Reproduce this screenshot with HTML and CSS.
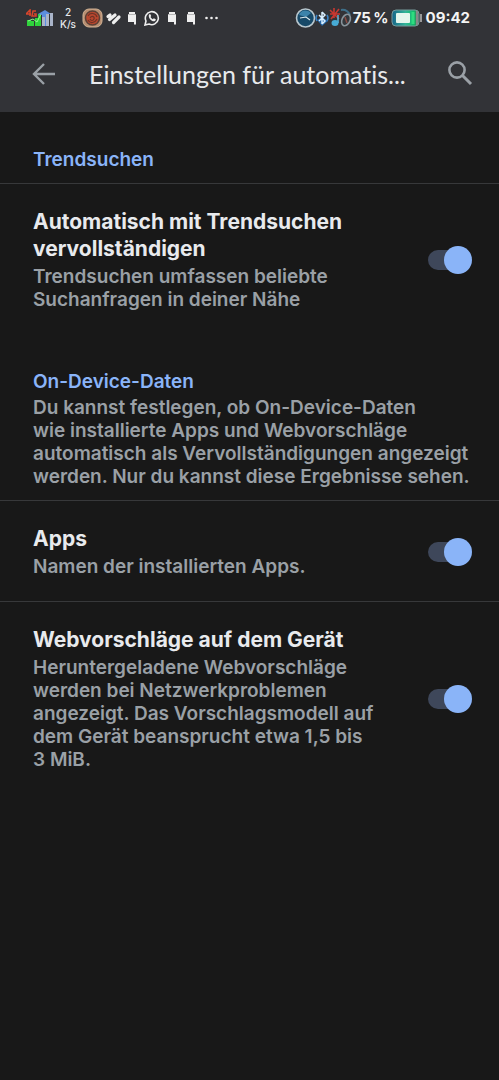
FILE: index.html
```html
<!DOCTYPE html>
<html lang="de">
<head>
<meta charset="utf-8">
<meta name="viewport" content="width=device-width, initial-scale=1">
<title>Einstellungen</title>
<link rel="stylesheet" href="styles.css">
</head>
<body>
<svg class="defs" width="0" height="0" aria-hidden="true">
  <symbol id="note" viewBox="0 0 10 16"><path d="M2 2h6v2h1v10.500H7V12H1V4h1z" fill="#eee"/><path d="M1 4.500h8" stroke="#aaa" stroke-width=".8"/></symbol>
</svg>
<div class="status">
  <div class="status-left">
    <svg class="signal" width="28" height="18" viewBox="0 0 28 18" aria-hidden="true">
      <path d="M4 7V1L0 5h5M10 2H7L6 7h4V5H8" fill="none" stroke="#d8452c" stroke-width="1.500"/>
      <path d="M1 11h4v6H1zM5 12h3v5H5zM9 9h3v8H9zM12 5h3v12h-3z" fill="#2fd23b"/>
      <path d="M2 12l5-2 4 3 4-8" fill="none" stroke="#8cf58a"/>
      <path d="M12 5l7-4 6 4h-3v12h-6V6z" fill="#5b8ddf"/>
      <path d="M16 8h3v9h-3zM20 5h3v12h-3zM24 4h3v13h-3z" fill="#a9b4c9"/>
    </svg>
    <div class="rate"><span>2</span><span>K/s</span></div>
    <svg class="badge" width="21" height="20" viewBox="0 0 21 20" aria-hidden="true">
      <rect x="1" y="1" width="19" height="18" rx="6" fill="#b98f72" stroke="#d1b294"/>
      <circle cx="10.500" cy="10" r="7" fill="#b9472e" stroke="#5b4036" stroke-width="1.500"/>
      <path d="M6 8c2-4 8-3 9 1M6 12c2 4 7 3 9-1M8 10c2-3 5-1 4 1s-3 2-4 0" fill="none" stroke="#6f3326" stroke-width="1.200"/>
    </svg>
    <svg class="heart" width="17" height="15" viewBox="0 0 17 15" fill="none" stroke="#eee" stroke-width="3.200" stroke-linecap="round" stroke-linejoin="round" aria-hidden="true"><path d="M3 5.500L5 4M4.500 8.500L10 4M8.500 11.500l5.500-5.500"/></svg>
    <svg class="note" width="10" height="16"><use href="#note"/></svg>
    <svg class="chat" width="16" height="16" viewBox="0 0 16 16" aria-hidden="true"><path d="M1 15l1-4a6.500 6.500 0 1 1 3 3z" fill="none" stroke="#eee" stroke-width="1.600"/><path d="M5 4.500l1.200-.5 1 2-.7 1c.5 1 1.300 1.700 2.300 2.200l1-.9 2 1c0 2-2 2.500-3.500 1.700C6.500 10.200 4 7 5 4.500z" fill="#eee"/></svg>
    <svg class="note" width="10" height="16"><use href="#note"/></svg>
    <svg class="note" width="10" height="16"><use href="#note"/></svg>
    <svg class="dots" width="13" height="4" viewBox="0 0 13 4" fill="#eee" aria-hidden="true"><circle cx="1.500" cy="2" r="1.300"/><circle cx="6.500" cy="2" r="1.300"/><circle cx="11.500" cy="2" r="1.300"/></svg>
  </div>
  <div class="status-right">
    <svg width="58" height="22" viewBox="0 0 58 22" aria-hidden="true">
      <circle cx="10.500" cy="11" r="9" fill="#174968" stroke="#b8c7ce" stroke-width="1.600"/>
      <path d="M4 8a7 7 0 0 1 12-2l-5 4z" fill="#3c83aa"/><path d="M5 11l6-1 4 3" fill="none" stroke="#dfecef" stroke-width="1.100"/>
      <path d="M22 8q-2 3 0 6M32 8q2 3 0 6" fill="none" stroke="#3b86c9" stroke-width="1.500"/>
      <path d="M22 13l5-3 6 4-6 5z" fill="#2567a8"/><path d="M27 5v12M24 8l6 6-3 3M27 5l3 3-6 6" fill="none" stroke="#d9efff" stroke-width="1.500"/>
      <path d="M35 3l9 9M44 2l-8 10M39 1v10M35 7h10" stroke="#c93730" stroke-width="1.600"/>
      <path d="M43 8v8" stroke="#58b7dc" stroke-width="1.500"/><ellipse cx="40" cy="16" rx="3.500" ry="3" fill="#47abd5"/>
      <path d="M46 3q6-1 9 5" fill="none" stroke="#3e6f89" stroke-width="2"/>
      <ellipse cx="51" cy="13" rx="4" ry="6" transform="rotate(25 51 13)" fill="#33383c" stroke="#88949b" stroke-width="1.600"/><path d="M50 10l2 6" stroke="#8a4a44" stroke-width="1.500"/>
    </svg>
    <span>75&#8201;%</span>
    <svg class="battery" width="31" height="18" viewBox="0 0 31 18" aria-hidden="true">
      <defs><linearGradient id="cell"><stop offset="0" stop-color="#17648a"/><stop offset=".5" stop-color="#32b598"/><stop offset=".8" stop-color="#10bd69"/><stop offset="1" stop-color="#545b5b"/></linearGradient></defs>
      <rect x="1" y="1" width="27" height="16" rx="4" fill="url(#cell)" stroke="#779b9b"/>
      <rect x="5" y="4" width="14" height="10" rx="1" fill="#e4f6ed"/><path d="M22 3v12" stroke="#2fdc80" stroke-width="3"/><path d="M26 2v14" stroke="#888" stroke-width="2"/><path d="M29 5h2v8h-2z" fill="#999"/>
    </svg>
    <time class="clock">09:42</time>
  </div>
</div>
<header class="bar">
  <button class="icon-button" type="button" aria-label="Zurück">
    <svg width="24" height="24" viewBox="0 0 24 24" fill="none" stroke="#9aa0a6" stroke-width="2.400"><path d="M23 12H3M12 2L2 12l10 10"/></svg>
  </button>
  <h1 class="bar-title">Einstellungen für automatis...</h1>
  <button class="icon-button" type="button" aria-label="Suchen">
    <svg width="26" height="26" viewBox="0 0 26 26" fill="none" stroke="#9aa0a6" stroke-width="2.600"><circle cx="10" cy="9" r="7.600"/><path d="M15.500 14.500l8.500 8.500" stroke-width="3"/></svg>
  </button>
</header>
<main>
  <section>
    <div class="section-head"><h2 class="section-title">Trendsuchen</h2></div>
    <div class="row">
      <div class="row-text">
        <label class="row-title" for="trends">Automatisch mit Trendsuchen vervollständigen</label>
        <p class="desc">Trendsuchen umfassen beliebte Suchanfragen in deiner Nähe</p>
      </div>
      <input class="switch" id="trends" type="checkbox" role="switch" checked>
    </div>
  </section>
  <section>
    <div class="section-head">
      <h2 class="section-title">On-Device-Daten</h2>
      <p class="desc">Du kannst festlegen, ob On-Device-Daten<br>wie installierte Apps und Webvorschläge automatisch als Vervollständigungen angezeigt werden. Nur du kannst diese Ergebnisse sehen.</p>
    </div>
    <div class="row">
      <div class="row-text">
        <label class="row-title" for="apps">Apps</label>
        <p class="desc">Namen der installierten Apps.</p>
      </div>
      <input class="switch" id="apps" type="checkbox" role="switch" checked>
    </div>
    <div class="row row-ruled">
      <div class="row-text">
        <label class="row-title" for="web">Webvorschläge auf dem Gerät</label>
        <p class="desc">Heruntergeladene Webvorschläge werden bei Netzwerkproblemen angezeigt. Das Vorschlagsmodell auf dem Gerät beansprucht etwa 1,5 bis 3&nbsp;MiB.</p>
      </div>
      <input class="switch" id="web" type="checkbox" role="switch" checked>
    </div>
  </section>
</main>
</body>
</html>
```
FILE: styles.css
```css
* { box-sizing: border-box; }
body {
  margin: 0;
  min-height: 100vh;
  background: #181818;
  color: #e8eaed;
  font-family: Inter, Roboto, sans-serif;
  font-weight: 600;
}
h1, h2, p { margin: 0; }
svg { display: block; flex: none; }
.defs { position: absolute; }
.status {
  display: flex;
  justify-content: space-between;
  align-items: center;
  height: 36px;
  padding: 0 29px 0 26px;
  background: #323337;
}
.status-left, .status-right { display: flex; align-items: center; }
.rate {
  display: flex;
  flex-direction: column;
  align-items: center;
  margin: 0 6px;
  font-size: 10px;
  font-weight: 500;
  line-height: 12px;
}
.heart { margin: 0 5px 0 2px; }
.chat { margin: 0 7px; }
.note + .note { margin-left: 9px; }
.dots { margin-left: 9px; }
.status-right {
  font-size: 15px;
  font-weight: 700;
  line-height: 20px;
  color: #f4f4f4;
}
.battery { margin-left: 2px; }
.clock { margin-left: 4px; }
.bar {
  display: flex;
  align-items: center;
  height: 76px;
  padding: 0 26px 0 32px;
  background: #323337;
}
.icon-button {
  display: flex;
  padding: 0;
  border: 0;
  background: none;
}
.bar-title {
  flex: 1;
  padding-left: 33px;
  overflow: hidden;
  white-space: nowrap;
  font-family: Lato, Inter, sans-serif;
  font-size: 25px;
  font-weight: 400;
  font-variant-ligatures: none;
  line-height: 32px;
}
.section-head {
  padding: 36px 27px 12px 33px;
  border-bottom: 1px solid #37383a;
}
.section-title {
  font-size: 19px;
  font-weight: 600;
  line-height: 23px;
  color: #8ab4f8;
}
.desc {
  margin-top: 3px;
  font-size: 19px;
  line-height: 23px;
  color: #9aa0a6;
}
.row {
  display: flex;
  align-items: center;
  justify-content: space-between;
  gap: 48px;
  padding: 24px 27px 23px 33px;
}
.row-ruled { border-top: 1px solid #37383a; }
.row-title {
  display: block;
  font-size: 21px;
  font-weight: 700;
  line-height: 27px;
}
.switch {
  appearance: none;
  display: grid;
  align-items: center;
  flex: none;
  width: 44px;
  height: 28px;
  margin: 0;
}
.switch::before, .switch::after {
  content: "";
  grid-area: 1 / 1;
}
.switch::before {
  width: 36px;
  height: 20px;
  border-radius: 10px;
  background: #3e475a;
}
.switch::after {
  justify-self: end;
  width: 28px;
  height: 28px;
  border-radius: 50%;
  background: #8ab4f8;
}
```
